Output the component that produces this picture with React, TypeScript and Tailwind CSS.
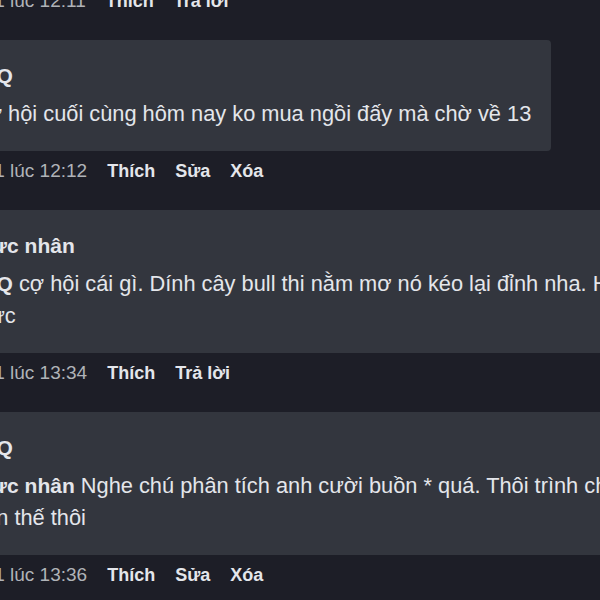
const font = { fontFamily: '"Liberation Sans", Arial, sans-serif' };

type Action = { time: string; links: string[] };

function ActionRow({ time, links }: Action) {
  return (
    <div className="-ml-[18px] mt-2 flex h-6 items-center gap-[20px] whitespace-nowrap text-[18px] leading-6">
      <span className="text-[19px] text-[#b0b3b8]">{time}</span>
      {links.map((l) => (
        <span key={l} className="font-bold text-[#e4e6eb]">
          {l}
        </span>
      ))}
    </div>
  );
}

function Bubble({ name, children, wide }: { name: string; children: React.ReactNode; wide?: boolean }) {
  return (
    <div
      className={`mt-[27px] rounded-sm bg-[#33363e] px-5 pb-[21px] pt-[21px] text-[#e4e6eb] ${
        wide ? "w-[780px]" : "w-fit"
      }`}
    >
      <div className="h-[30px] whitespace-nowrap text-[21px] font-bold leading-[30px]">{name}</div>
      <div className="mt-[7px] whitespace-nowrap text-[21.8px] leading-8">{children}</div>
    </div>
  );
}

function Mention({ children }: { children: React.ReactNode }) {
  return <span className="text-[21px] font-bold">{children}</span>;
}

export default function App() {
  return (
    <div className="h-[600px] w-[600px] overflow-hidden bg-[#1d1e27]" style={font}>
      <div className="-ml-[48px] -mt-[19px] flex flex-col items-start">
        <ActionRow time="Ngày 21 lúc 12:11" links={["Thích", "Trả lời"]} />

        <Bubble name="Tí Q">Cơ hội cuối cùng hôm nay ko mua ngồi đấy mà chờ về 13</Bubble>
        <ActionRow time="Ngày 21 lúc 12:12" links={["Thích", "Sửa", "Xóa"]} />

        <Bubble name="Trực nhân" wide>
          <Mention>Tí Q</Mention> cợ hội cái gì. Dính cây bull thi nằm mơ nó kéo lại đỉnh nha. Hãy sống
          <br />
          thực
        </Bubble>
        <ActionRow time="Ngày 21 lúc 13:34" links={["Thích", "Trả lời"]} />

        <Bubble name="Tí Q" wide>
          <Mention>Trực nhân</Mention> Nghe chú phân tích anh cười buồn * quá. Thôi trình chú chỉ
          <br />
          đến thế thôi
        </Bubble>
        <ActionRow time="Ngày 21 lúc 13:36" links={["Thích", "Sửa", "Xóa"]} />
      </div>
    </div>
  );
}
